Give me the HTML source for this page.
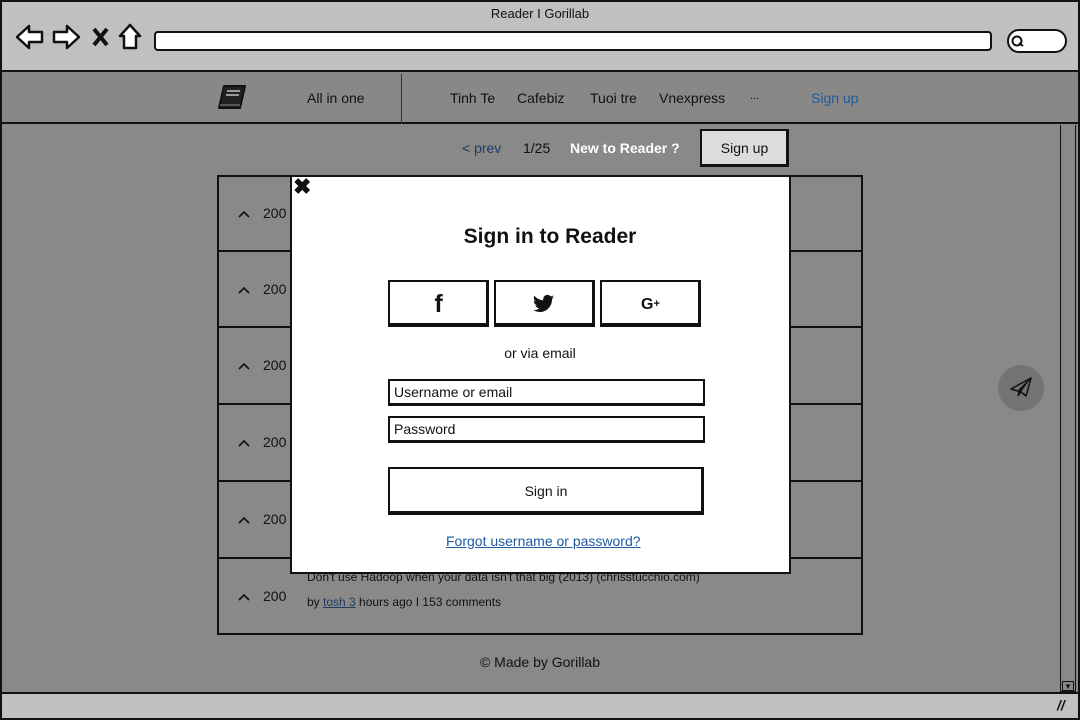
<!DOCTYPE html>
<html><head><meta charset="utf-8"><style>
*{margin:0;padding:0;box-sizing:border-box}
body{width:1080px;height:720px;overflow:hidden;background:#8a8987;font-family:"Liberation Sans",sans-serif;color:#111;position:relative}
.a{position:absolute}
.t{font-size:14px;white-space:nowrap}
.ch{position:absolute;left:237px;width:14px;height:10px}
</style></head><body>
<div class="a" style="left:0;top:0;width:1080px;height:720px;border:2px solid #111"></div>
<div class="a" style="left:2px;top:2px;width:1076px;height:70px;background:#c0c0c0;border-bottom:2px solid #111"></div>
<div class="a t" style="left:0;width:1080px;top:6px;text-align:center;font-size:13px">Reader I Gorillab</div>
<svg class="a" style="left:14px;top:22px" width="135" height="30" viewBox="0 0 135 30">
<path d="M3 15 L15 4 L15 10 L28 10 L28 20 L15 20 L15 26 Z" fill="#fff" stroke="#111" stroke-width="2.5" stroke-linejoin="round"/>
<path d="M65 15 L53 4 L53 10 L40 10 L40 20 L53 20 L53 26 Z" fill="#fff" stroke="#111" stroke-width="2.5" stroke-linejoin="round"/>
<path d="M80 7 L93 23 M93 7 L80 23" stroke="#111" stroke-width="4"/>
<path d="M116 3 L106 14 L110 14 L110 26 L122 26 L122 14 L126 14 Z" fill="#fff" stroke="#111" stroke-width="2.5" stroke-linejoin="round"/>
</svg>
<div class="a" style="left:154px;top:31px;width:838px;height:20px;background:#fff;border:2.5px solid #111;border-radius:4px"></div>
<div class="a" style="left:1007px;top:29px;width:60px;height:24px;background:#fff;border:2.5px solid #111;border-radius:12px"></div>
<svg class="a" style="left:1010px;top:34px" width="16" height="14"><circle cx="7" cy="7" r="4.5" fill="none" stroke="#111" stroke-width="2"/><path d="M9 9 L13 12" stroke="#111" stroke-width="2"/></svg>
<div class="a" style="left:2px;top:74px;width:1076px;height:50px;background:#898887;border-bottom:2px solid #111"></div>
<div class="a" style="left:401px;top:74px;width:1px;height:50px;background:#333"></div>
<svg class="a" style="left:216px;top:84px" width="34" height="28"><path d="M8 2 L29 2 L24 24 L3 24 Z" fill="#222" stroke="#111" stroke-width="2" stroke-linejoin="round"/><path d="M11 7 L24 7 M10 11 L23 11" stroke="#999" stroke-width="2"/><path d="M4 21 L24 21" stroke="#888" stroke-width="1"/></svg>
<div class="a t" style="left:307px;top:90px">All in one</div>
<div class="a t" style="left:450px;top:90px">Tinh Te</div>
<div class="a t" style="left:517px;top:90px">Cafebiz</div>
<div class="a t" style="left:590px;top:90px">Tuoi tre</div>
<div class="a t" style="left:659px;top:90px">Vnexpress</div>
<div class="a t" style="left:750px;top:90px;font-size:11px">...</div>
<div class="a t" style="left:811px;top:90px;color:#1e5aa0">Sign up</div>
<div class="a" style="left:1060px;top:125px;width:16px;height:567px;border:1.5px solid #111;border-top:none"></div>
<div class="a" style="left:1062px;top:681px;width:12px;height:10px;border:1px solid #111;font-size:8px;text-align:center;line-height:9px">▼</div>
<div class="a" style="left:2px;top:692px;width:1076px;height:26px;background:#c0c0c0;border-top:2px solid #111"></div>
<div class="a t" style="left:1057px;top:697px;font-weight:bold;font-style:italic">//</div>
<div class="a t" style="left:462px;top:140px;color:#1e3c66">&lt; prev</div>
<div class="a t" style="left:523px;top:140px">1/25</div>
<div class="a t" style="left:570px;top:140px;color:#fff;font-weight:bold">New to Reader ?</div>
<div class="a" style="left:700px;top:129px;width:89px;height:38px;background:#dcdcdc;border:2px solid #111;border-right-width:3px;border-bottom-width:3px"></div>
<div class="a t" style="left:700px;top:140px;width:89px;text-align:center">Sign up</div>
<div class="a" style="left:217px;top:175px;width:646px;height:460px;border:2px solid #111"></div>
<div class="a" style="left:217px;top:250px;width:646px;height:2px;background:#111"></div>
<div class="a" style="left:217px;top:326px;width:646px;height:2px;background:#111"></div>
<div class="a" style="left:217px;top:403px;width:646px;height:2px;background:#111"></div>
<div class="a" style="left:217px;top:480px;width:646px;height:2px;background:#111"></div>
<div class="a" style="left:217px;top:557px;width:646px;height:2px;background:#111"></div>
<svg class="ch" style="top:209px"><path d="M2 8 L7 3 L12 8" fill="none" stroke="#111" stroke-width="1.6"/></svg>
<svg class="ch" style="top:285px"><path d="M2 8 L7 3 L12 8" fill="none" stroke="#111" stroke-width="1.6"/></svg>
<svg class="ch" style="top:361px"><path d="M2 8 L7 3 L12 8" fill="none" stroke="#111" stroke-width="1.6"/></svg>
<svg class="ch" style="top:438px"><path d="M2 8 L7 3 L12 8" fill="none" stroke="#111" stroke-width="1.6"/></svg>
<svg class="ch" style="top:515px"><path d="M2 8 L7 3 L12 8" fill="none" stroke="#111" stroke-width="1.6"/></svg>
<svg class="ch" style="top:592px"><path d="M2 8 L7 3 L12 8" fill="none" stroke="#111" stroke-width="1.6"/></svg>
<div class="a t" style="left:263px;top:205px">200</div>
<div class="a t" style="left:263px;top:281px">200</div>
<div class="a t" style="left:263px;top:357px">200</div>
<div class="a t" style="left:263px;top:434px">200</div>
<div class="a t" style="left:263px;top:511px">200</div>
<div class="a t" style="left:263px;top:588px">200</div>
<div class="a t" style="left:307px;top:570px;font-size:12px">Don't use Hadoop when your data isn't that big (2013) (chrisstucchio.com)</div>
<div class="a t" style="left:307px;top:595px;font-size:12px">by <span style="color:#1e3c66;text-decoration:underline">tosh 3</span> hours ago I 153 comments</div>
<div class="a t" style="left:0;width:1080px;top:654px;text-align:center">© Made by Gorillab</div>
<div class="a" style="left:998px;top:365px;width:46px;height:46px;border-radius:50%;background:#747372"></div>
<svg class="a" style="left:1008px;top:375px" width="26" height="26"><path d="M3 14 L23 3 L18 21 L13 17 Z" fill="none" stroke="#111" stroke-width="1.5" stroke-linejoin="round"/><path d="M23 3 L11 15 L10 21 L13 17" fill="#111" stroke="#111" stroke-width="1.2"/></svg>
<div class="a" style="left:290px;top:175px;width:501px;height:399px;background:#fff;border:2px solid #111"></div>
<div class="a" style="left:293px;top:174px;font-size:22px;font-weight:bold">✖</div>
<div class="a" style="left:290px;top:225px;width:520px;text-align:center;font-size:21px;font-weight:bold">Sign in to Reader</div>
<div class="a" style="left:388px;top:280px;width:101px;height:47px;border:2px solid #111;border-right-width:3px;border-bottom-width:4px"></div>
<div class="a" style="left:494px;top:280px;width:101px;height:47px;border:2px solid #111;border-right-width:3px;border-bottom-width:4px"></div>
<div class="a" style="left:600px;top:280px;width:101px;height:47px;border:2px solid #111;border-right-width:3px;border-bottom-width:4px"></div>
<div class="a" style="left:388px;top:290px;width:101px;text-align:center;font-size:25px;font-weight:bold;line-height:28px">f</div>
<svg class="a" style="left:533px;top:294px" width="22" height="20" viewBox="0 0 24 20"><path d="M23 2.5c-.9.4-1.8.6-2.7.7 1-.6 1.7-1.5 2-2.6-.9.5-1.9.9-3 1.1C18.4.7 17.2.1 15.8.1c-2.6 0-4.7 2.1-4.7 4.7 0 .4 0 .7.1 1.1C7.3 5.7 3.8 3.8 1.5 1 1.1 1.7.9 2.5.9 3.3c0 1.6.8 3.1 2.1 3.9-.8 0-1.5-.2-2.1-.6v.1c0 2.3 1.6 4.2 3.8 4.6-.4.1-.8.2-1.2.2-.3 0-.6 0-.9-.1.6 1.9 2.3 3.2 4.4 3.3-1.6 1.3-3.6 2-5.8 2-.4 0-.8 0-1.1-.1 2.1 1.3 4.5 2.1 7.2 2.1 8.6 0 13.4-7.2 13.4-13.4v-.6c.9-.7 1.7-1.5 2.3-2.4z" fill="#111"/></svg>
<div class="a" style="left:600px;top:296px;width:101px;text-align:center;font-size:16px;font-weight:bold">G<span style="font-size:11px;vertical-align:2px">+</span></div>
<div class="a t" style="left:290px;top:345px;width:500px;text-align:center">or via email</div>
<div class="a" style="left:388px;top:379px;width:317px;height:27px;border:2px solid #111;border-bottom-width:3px"></div>
<div class="a t" style="left:394px;top:384px">Username or email</div>
<div class="a" style="left:388px;top:416px;width:317px;height:27px;border:2px solid #111;border-bottom-width:3px"></div>
<div class="a t" style="left:394px;top:421px">Password</div>
<div class="a" style="left:388px;top:467px;width:316px;height:48px;border:2px solid #111;border-right-width:3px;border-bottom-width:4px"></div>
<div class="a t" style="left:388px;top:483px;width:316px;text-align:center">Sign in</div>
<div class="a t" style="left:446px;top:533px;color:#1e5aa0;text-decoration:underline">Forgot username or password?</div>
</body></html>
